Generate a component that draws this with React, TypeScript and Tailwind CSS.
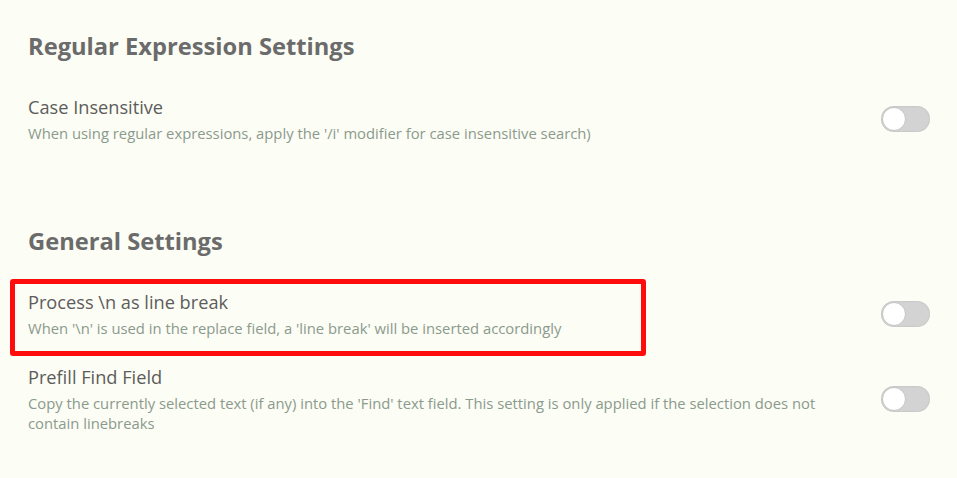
import React from "react";

function Toggle() {
  return (
    <div className="relative h-[26px] w-[49px] shrink-0 rounded-full bg-[#d3d3d3] shadow-[inset_0_0_2px_rgba(0,0,0,0.15)]">
      <div className="absolute left-[1px] top-[1px] h-[24px] w-[24px] rounded-full border border-[#c4c4c4] bg-white" />
    </div>
  );
}

function Item({ title, desc, boxed }: { title: string; desc: string; boxed?: boolean }) {
  return (
    <div className="relative flex items-center justify-between pl-[28px] pr-[27px]">
      <div className="max-w-[802px]">
        <div className="text-[18.2px] leading-[26px] text-[#5c5c5c]">{title}</div>
        <div className="mt-[3px] text-[14.8px] leading-[20px] text-[#8b9a8e]">{desc}</div>
      </div>
      <Toggle />
      {boxed && (
        <div className="pointer-events-none absolute left-[10px] top-[-10px] h-[77px] w-[636px] rounded-[3px] border-[5px] border-[#ff0d0d]" />
      )}
    </div>
  );
}

export default function App() {
  return (
    <div
      className="h-[478px] w-[957px] overflow-hidden bg-[#fcfdf4]"
      style={{ fontFamily: '"Open Sans", "Noto Sans", sans-serif' }}
    >
      <div className="pt-[30px]">
        <h2 className="pl-[28px] text-[23.7px] font-bold leading-[32px] text-[#6b6b6b]">Regular Expression Settings</h2>
        <div className="mt-[32px]">
          <Item
            title="Case Insensitive"
            desc="When using regular expressions, apply the '/i' modifier for case insensitive search)"
          />
        </div>
        <h2 className="mt-[82px] pl-[28px] text-[23.7px] font-bold leading-[32px] text-[#6b6b6b]">General Settings</h2>
        <div className="mt-[32px]">
          <Item
            boxed
            title="Process \n as line break"
            desc="When '\n' is used in the replace field, a 'line break' will be inserted accordingly"
          />
        </div>
        <div className="mt-[26px]">
          <Item
            title="Prefill Find Field"
            desc="Copy the currently selected text (if any) into the 'Find' text field. This setting is only applied if the selection does not contain linebreaks"
          />
        </div>
      </div>
    </div>
  );
}
